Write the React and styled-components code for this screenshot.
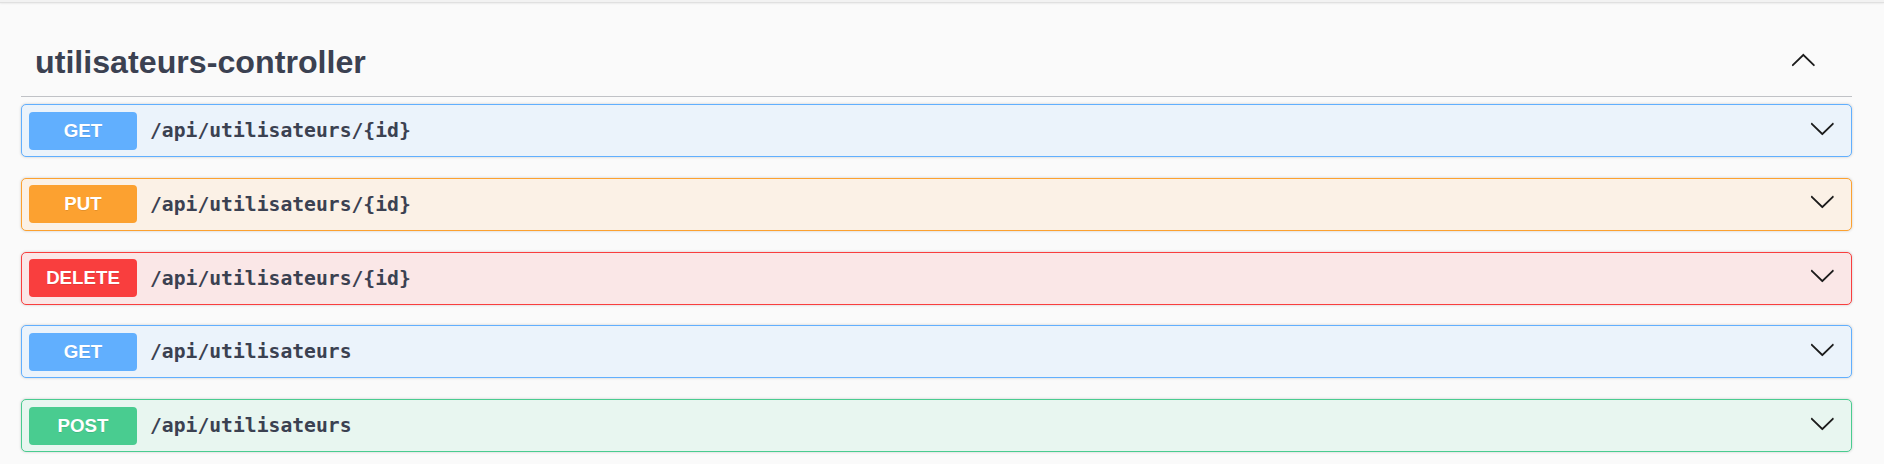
import React from 'react';
import styled, { createGlobalStyle } from 'styled-components';

const GlobalStyle = createGlobalStyle`
  html, body {
    margin: 0;
    padding: 0;
    background: #fafafa;
  }
  body {
    font-family: "Liberation Sans", Arial, sans-serif;
    color: #3b4151;
  }
`;

// couleurs par méthode http
const METHODS = {
  GET: { color: '#61affe', bg: '#ebf3fb' },
  PUT: { color: '#fca130', bg: '#fbf1e6' },
  DELETE: { color: '#f93e3e', bg: '#fae7e7' },
  POST: { color: '#49cc90', bg: '#e8f6f0' },
};

const operations = [
  { method: 'GET', path: '/api/utilisateurs/{id}' },
  { method: 'PUT', path: '/api/utilisateurs/{id}' },
  { method: 'DELETE', path: '/api/utilisateurs/{id}' },
  { method: 'GET', path: '/api/utilisateurs' },
  { method: 'POST', path: '/api/utilisateurs' },
];

// bord gris en haut de la page
const TopEdge = styled.div`
  height: 2px;
  background: #f2f2f2;
  border-bottom: 1px solid #e0e0e0;
  box-shadow: 0 1px 2px rgba(0, 0, 0, 0.06);
`;

const Wrapper = styled.div`
  padding: 0 32px 0 21px;
`;

const TagHeader = styled.div`
  display: flex;
  align-items: center;
  justify-content: space-between;
  padding: 41px 35px 15px 14px;
  border-bottom: 1px solid rgba(59, 65, 81, 0.3);
  margin-bottom: 7px;
`;

const TagTitle = styled.h3`
  margin: 0;
  font-size: 32.2px;
  line-height: 37px;
  font-weight: 700;
  color: #3b4151;
`;

const Arrow = styled.svg`
  display: block;
  width: 26.67px;
  height: 26.67px;
  fill: #1b1b1b;
  margin-bottom: ${p => p.$lift || 0}px;
`;

const OpBlock = styled.div`
  display: flex;
  align-items: center;
  height: 53px;
  box-sizing: border-box;
  padding: 0 15px 0 7px;
  margin-bottom: 20.75px;
  border: 1px solid ${p => p.$color};
  background: ${p => p.$bg};
  border-radius: 5px;
  box-shadow: 0 0 3px rgba(0, 0, 0, 0.19);
`;

const MethodBadge = styled.span`
  display: flex;
  align-items: center;
  justify-content: center;
  width: 108px;
  height: 38px;
  flex-shrink: 0;
  border-radius: 4px;
  background: ${p => p.$color};
  color: #fff;
  font-family: "Liberation Sans", Arial, sans-serif;
  font-size: 18.7px;
  font-weight: 700;
  text-shadow: 0 1px 0 rgba(0, 0, 0, 0.1);
`;

const Path = styled.span`
  flex: 1;
  padding-left: 13px;
  font-family: "DejaVu Sans Mono", "Liberation Mono", monospace;
  font-size: 19.7px;
  font-weight: 700;
  color: #3b4151;
`;

const ArrowUp = props => (
  <Arrow viewBox="0 0 20 20" {...props}>
    <path d="M17.418 14.908c.272.268.709.268.979 0s.271-.701 0-.969l-7.908-7.83c-.27-.268-.707-.268-.979 0l-7.908 7.83c-.27.268-.27.701 0 .969.271.268.709.268.979 0L10 7.767l7.418 7.141z" />
  </Arrow>
);

const ArrowDown = props => (
  <Arrow viewBox="0 0 20 20" {...props}>
    <path d="M17.418 6.109c.272-.268.709-.268.979 0s.271.701 0 .969l-7.908 7.83c-.27.268-.707.268-.979 0l-7.908-7.83c-.27-.268-.27-.701 0-.969.271-.268.709-.268.979 0L10 13.25l7.418-7.141z" />
  </Arrow>
);

const Operation = ({ method, path }) => {
  const m = METHODS[method];
  return (
    <OpBlock $color={m.color} $bg={m.bg}>
      <MethodBadge $color={m.color}>{method}</MethodBadge>
      <Path>{path}</Path>
      <ArrowDown $lift={5} />
    </OpBlock>
  );
};

const App = () => (
  <>
    <GlobalStyle />
    <TopEdge />
    <Wrapper>
      <TagHeader>
        <TagTitle>utilisateurs-controller</TagTitle>
        <ArrowUp $lift={6} />
      </TagHeader>
      {operations.map((op, i) => (
        <Operation key={i} {...op} />
      ))}
    </Wrapper>
  </>
);

export default App;
